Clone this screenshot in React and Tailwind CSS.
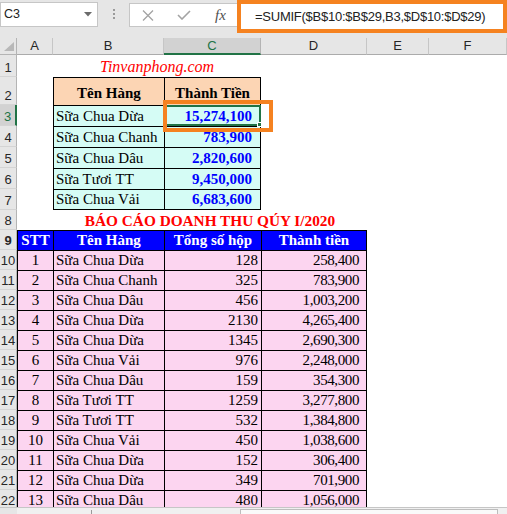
import React from 'react';

const SERIF = "font-['Liberation_Serif','Times_New_Roman',serif]";
const SANS = "font-['Liberation_Sans',Arial,sans-serif]";

const summary = [
  ['Sữa Chua Dừa', '15,274,100'],
  ['Sữa Chua Chanh', '783,900'],
  ['Sữa Chua Dâu', '2,820,600'],
  ['Sữa Tươi TT', '9,450,000'],
  ['Sữa Chua Vải', '6,683,600'],
];

const sales = [
  [1, 'Sữa Chua Dừa', '128', '258,400'],
  [2, 'Sữa Chua Chanh', '325', '783,900'],
  [3, 'Sữa Chua Dâu', '456', '1,003,200'],
  [4, 'Sữa Chua Dừa', '2130', '4,265,400'],
  [5, 'Sữa Chua Dừa', '1345', '2,690,300'],
  [6, 'Sữa Chua Vải', '976', '2,248,000'],
  [7, 'Sữa Chua Dâu', '159', '354,300'],
  [8, 'Sữa Tươi TT', '1259', '3,277,800'],
  [9, 'Sữa Tươi TT', '532', '1,384,800'],
  [10, 'Sữa Chua Vải', '450', '1,038,600'],
  [11, 'Sữa Chua Dừa', '152', '306,400'],
  [12, 'Sữa Chua Dừa', '349', '701,900'],
  [13, 'Sữa Chua Dâu', '480', '1,056,000'],
];

function RowHead({ n, active = false }) {
  return (
    <div
      className={`w-[17px] shrink-0 flex items-end justify-center pb-[2px] border-b border-b-[#d4d4d4] text-[13px] leading-[13px] ${SANS} ${
        active
          ? 'bg-[#d2d2d2] text-[#217346] border-r-2 border-r-[#217346]'
          : 'bg-[#e6e6e6] text-[#262626] border-r border-r-[#b4b4b4]'
      }`}
    >
      {n}
    </div>
  );
}

function FormulaBar() {
  return (
    <div className={`h-[38px] bg-[#e6e6e6] flex items-start ${SANS}`}>
      {/* name box */}
      <div className="mt-[2px] w-[98px] h-[25px] bg-white border border-[#c6c6c6] flex items-center justify-between pl-[3px] pr-[5px]">
        <span className="text-[12.5px] text-[#222]">C3</span>
        <svg width="8" height="5" viewBox="0 0 8 5">
          <polygon points="0,0 8,0 4,4.5" fill="#6b6b6b" />
        </svg>
      </div>
      <div className="w-[31px] h-[27px] flex flex-col items-center justify-center gap-[2px]">
        <span className="w-[2px] h-[2px] bg-[#9a9a9a]" />
        <span className="w-[2px] h-[2px] bg-[#9a9a9a]" />
        <span className="w-[2px] h-[2px] bg-[#9a9a9a]" />
      </div>
      {/* cancel / enter / fx */}
      <div className="mt-[3px] w-[108px] h-[24px] bg-white border border-r-0 border-[#c6c6c6] flex items-center">
        <svg className="ml-[12px]" width="12" height="11" viewBox="0 0 12 11">
          <path d="M1 0.5 L11 10.5 M11 0.5 L1 10.5" stroke="#a3a3a3" strokeWidth="1.3" />
        </svg>
        <svg className="ml-[23px]" width="14" height="10" viewBox="0 0 14 10">
          <path d="M1 5 L5 9 L13 1" stroke="#a3a3a3" strokeWidth="1.6" fill="none" />
        </svg>
        <span className={`ml-[24px] italic text-[15px] text-[#505050] ${SERIF}`}>fx</span>
      </div>
      {/* formula box with annotation */}
      <div className="w-[270px] h-[33px] border-4 border-[#f58220] bg-white flex items-center pl-[14px]">
        <span className="text-[13px] tracking-[-0.25px] text-[#222]">=SUMIF($B$10:$B$29,B3,$D$10:$D$29)</span>
      </div>
    </div>
  );
}

function ColumnHeader() {
  const cols = [
    ['A', 'w-[36px]'],
    ['B', 'w-[111px]'],
    ['C', 'w-[97px]'],
    ['D', 'w-[106px]'],
    ['E', 'w-[62px]'],
    ['F', 'w-[78px]'],
  ];
  return (
    <div className={`flex h-[17px] bg-[#e6e6e6] text-[13px] ${SANS}`}>
      <div className="w-[17px] shrink-0 flex items-end justify-end pr-[2px] pb-[3px] border-r border-b border-[#b4b4b4]">
        <svg width="10" height="9" viewBox="0 0 10 9">
          <polygon points="10,0 10,9 0,9" fill="#b8b8b8" />
        </svg>
      </div>
      {cols.map(([label, w]) =>
        label === 'C' ? (
          <div
            key={label}
            className={`${w} shrink-0 flex items-center justify-center bg-[#d2d2d2] text-[#217346] border-r border-r-[#b4b4b4] border-b-2 border-b-[#217346]`}
          >
            {label}
          </div>
        ) : (
          <div
            key={label}
            className={`${w} shrink-0 flex items-center justify-center text-[#262626] border-r border-r-[#c6c6c6] border-b border-b-[#ababab]`}
          >
            {label}
          </div>
        )
      )}
    </div>
  );
}

export default function App() {
  return (
    <div className="w-[507px] h-[514px] bg-white overflow-hidden">
      <FormulaBar />
      <ColumnHeader />

      <div className={`relative h-[452px] overflow-hidden ${SERIF}`}>
        {/* row 1 */}
        <div className="flex h-[22px]">
          <RowHead n={1} />
          <div className="w-[36px] shrink-0" />
          <div className="w-[208px] shrink-0 flex items-end justify-center pb-[2px] text-[16px] leading-[16px] italic text-[#ff0000]">
            Tinvanphong.com
          </div>
        </div>

        {/* row 2 */}
        <div className="flex h-[28px]">
          <RowHead n={2} />
          <div className="w-[36px] shrink-0" />
          <div className="w-[111px] shrink-0 flex items-end justify-center pb-[4px] bg-[#fcd5b4] border-l border-t border-black text-[15px] leading-[15px] font-bold text-black">
            Tên Hàng
          </div>
          <div className="w-[97px] shrink-0 flex items-end justify-center pb-[4px] bg-[#fcd5b4] border-l border-t border-r border-black text-[15px] leading-[15px] font-bold text-black">
            Thành Tiền
          </div>
        </div>

        {/* rows 3-7 */}
        {summary.map(([name, total], i) => (
          <div key={name} className="flex h-[21px]">
            <RowHead n={i + 3} active={i === 0} />
            <div className="w-[36px] shrink-0" />
            <div
              className={`w-[111px] shrink-0 flex items-end pl-[2px] pb-[2px] bg-[#d5fcf5] border-l border-t border-black text-[15px] leading-[15px] text-black ${
                i === summary.length - 1 ? 'border-b' : ''
              }`}
            >
              {name}
            </div>
            <div
              className={`w-[97px] shrink-0 flex items-end justify-end pr-[8px] pb-[2px] bg-[#d5fcf5] border-l border-t border-r border-black text-[15px] leading-[15px] font-bold text-[#0000ff] ${
                i === summary.length - 1 ? 'border-b' : ''
              }`}
            >
              {total}
            </div>
          </div>
        ))}

        {/* row 8 */}
        <div className="flex h-[20px]">
          <RowHead n={8} />
          <div className="w-[36px] shrink-0" />
          <div className="w-[314px] shrink-0 flex items-end justify-center pb-[2px] text-[15.3px] leading-[15px] font-bold text-[#ff0000]">
            BÁO CÁO DOANH THU QÚY I/2020
          </div>
        </div>

        {/* row 9 */}
        <div className="flex h-[20px] text-[15px] leading-[15px] font-bold text-white">
          <RowHead n={9} />
          <div className="w-[36px] shrink-0 flex items-end justify-center pb-[2px] bg-[#0000ff] border-l border-t border-black">STT</div>
          <div className="w-[111px] shrink-0 flex items-end justify-center pb-[2px] bg-[#0000ff] border-l border-t border-black">Tên Hàng</div>
          <div className="w-[97px] shrink-0 flex items-end justify-center pb-[2px] bg-[#0000ff] border-l border-t border-black">Tổng số hộp</div>
          <div className="w-[106px] shrink-0 flex items-end justify-center pb-[2px] bg-[#0000ff] border-l border-t border-r border-black">Thành tiền</div>
        </div>

        {/* rows 10-22 */}
        {sales.map(([stt, name, qty, amount], i) => (
          <div key={stt} className="flex h-[20px] text-[15px] leading-[15px] text-black">
            <RowHead n={i + 10} />
            <div className="w-[36px] shrink-0 flex items-end justify-center pb-[2px] bg-[#fcd5f0] border-l border-t border-black">{stt}</div>
            <div className="w-[111px] shrink-0 flex items-end pl-[2px] pb-[2px] bg-[#fcd5f0] border-l border-t border-black">{name}</div>
            <div className="w-[97px] shrink-0 flex items-end justify-end pr-[3px] pb-[2px] bg-[#fcd5f0] border-l border-t border-black">{qty}</div>
            <div className="w-[106px] shrink-0 flex items-end justify-end pr-[7px] pb-[2px] bg-[#fcd5f0] border-l border-t border-r border-black tracking-[-0.4px]">{amount}</div>
          </div>
        ))}

        {/* active cell C3 */}
        <div className="absolute left-[164px] top-[50px] w-[97px] h-[21px] border-2 border-[#217346]" />
        <div className="absolute left-[257px] top-[67px] w-[5px] h-[5px] bg-[#217346] border border-white" />
        {/* orange annotation box */}
        <div className="absolute left-[163px] top-[45px] w-[110px] h-[32px] border-4 border-[#f58220]" />
      </div>

      {/* bottom bar */}
      <div className="flex h-[7px] bg-[#f0f0f0] border-t border-[#c6c6c6]">
        <div className="w-[17px] bg-[#e6e6e6]" />
        <div className="w-[75px] border-r border-[#9a9a9a] h-[4px] mt-[2px]" />
        <div className="w-[148px]" />
        <div className="w-[258px] mt-[1px] bg-[#fafafa] border border-b-0 border-[#bdbdbd]" />
      </div>
    </div>
  );
}
